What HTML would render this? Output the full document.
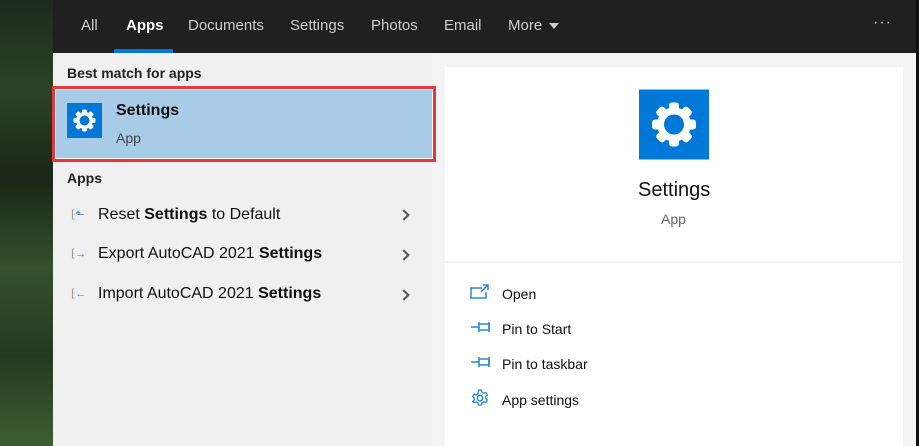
<!DOCTYPE html>
<html><head><meta charset="utf-8"><style>
*{margin:0;padding:0;box-sizing:border-box}
body{width:919px;height:446px;overflow:hidden;position:relative;font-family:"Segoe UI","Liberation Sans",sans-serif;background:#f0f0f0}
.forest{position:absolute;left:0;top:0;width:53px;height:446px;background:linear-gradient(180deg,#1d2a1c 0%,#2c4227 20%,#1a2617 40%,#34502c 60%,#233a1f 80%,#3d5e33 100%)}
.top{position:absolute;left:53px;top:0;width:866px;height:53px;background:#202020}
.tab{position:absolute;top:17px;color:#cfcfcf;font-size:15px}
.left{position:absolute;left:53px;top:53px;width:379px;height:393px;background:#f0f0f0}
.right{position:absolute;left:432px;top:53px;width:484px;height:393px;background:#f3f3f3}
.card{position:absolute;background:#fff;left:445px;width:458px}
.rb{position:absolute;right:0;top:0;width:3px;height:446px;background:#111}
.t{position:absolute;color:#111;white-space:nowrap}
.chev{position:absolute;left:400px;width:8px;height:8px;border-right:2px solid #555;border-top:2px solid #555;transform:rotate(45deg)}
</style></head><body>
<div class="forest"></div>
<div class="top">
<span class="tab" style="left:28px">All</span>
<span class="tab" style="left:73px;color:#fff;font-weight:bold">Apps</span>
<div style="position:absolute;left:61px;top:49px;width:59px;height:4px;background:#0078d7"></div>
<span class="tab" style="left:135px">Documents</span>
<span class="tab" style="left:237px">Settings</span>
<span class="tab" style="left:318px">Photos</span>
<span class="tab" style="left:391px">Email</span>
<span class="tab" style="left:455px">More</span>
<span style="position:absolute;left:496px;top:23px;border-left:5px solid transparent;border-right:5px solid transparent;border-top:6px solid #cfcfcf"></span>
<span style="position:absolute;left:820px;top:14px;color:#ccc;font-size:16px;letter-spacing:1px">···</span>
</div>
<div class="left"></div>
<div class="right"></div>
<div class="card" style="top:67px;height:194px"></div>
<div class="card" style="top:263px;height:183px"></div>
<div class="rb"></div>

<div class="t" style="left:67px;top:65px;font-size:14px;font-weight:bold;color:#222">Best match for apps</div>
<div style="position:absolute;left:52px;top:86px;width:384px;height:76px;background:#a8cbe7;border:3px solid #e8383d;box-shadow:inset 0 0 0 1px #fff"></div>
<svg style="position:absolute;left:67px;top:103px" width="35" height="35" viewBox="0 0 70 70"><rect width="70" height="70" fill="#0078d7"/><g fill="#fff" transform="translate(35 35)"><rect x="-5" y="-22" width="10" height="44" rx="3"/><rect x="-5" y="-22" width="10" height="44" rx="3" transform="rotate(45)"/><rect x="-5" y="-22" width="10" height="44" rx="3" transform="rotate(90)"/><rect x="-5" y="-22" width="10" height="44" rx="3" transform="rotate(135)"/><circle r="17"/></g><circle cx="35" cy="35" r="10" fill="#0078d7"/></svg>
<div class="t" style="left:116px;top:102px;font-size:16px;font-weight:bold">Settings</div>
<div class="t" style="left:116px;top:130px;font-size:14px;color:#444">App</div>

<div class="t" style="left:67px;top:170px;font-size:14px;font-weight:bold;color:#222">Apps</div>
<div class="t" style="left:71px;top:208px;font-size:11px;color:#999">⁅<span style="color:#3a7fd5">⬑</span></div>
<div class="t" style="left:98px;top:206px;font-size:16px">Reset <b>Settings</b> to Default</div>
<div class="chev" style="top:211px"></div>
<div class="t" style="left:71px;top:247px;font-size:11px;color:#999">⁅<span style="color:#3a7fd5">→</span></div>
<div class="t" style="left:98px;top:245px;font-size:16px">Export AutoCAD 2021 <b>Settings</b></div>
<div class="chev" style="top:251px"></div>
<div class="t" style="left:71px;top:287px;font-size:11px;color:#999">⁅<span style="color:#3a7fd5">←</span></div>
<div class="t" style="left:98px;top:285px;font-size:16px">Import AutoCAD 2021 <b>Settings</b></div>
<div class="chev" style="top:291px"></div>

<svg style="position:absolute;left:639px;top:89px" width="70" height="71" viewBox="0 0 70 70"><rect width="70" height="70" fill="#0078d7"/><g fill="#fff" transform="translate(35 35)"><rect x="-5" y="-22" width="10" height="44" rx="3"/><rect x="-5" y="-22" width="10" height="44" rx="3" transform="rotate(45)"/><rect x="-5" y="-22" width="10" height="44" rx="3" transform="rotate(90)"/><rect x="-5" y="-22" width="10" height="44" rx="3" transform="rotate(135)"/><circle r="17"/></g><circle cx="35" cy="35" r="10" fill="#0078d7"/></svg>
<div class="t" style="left:638px;top:179px;font-size:20px">Settings</div>
<div class="t" style="left:661px;top:211px;font-size:14px;color:#666">App</div>

<svg style="position:absolute;left:470px;top:284px" width="20" height="16" viewBox="0 0 20 16" fill="none" stroke="#2b88d8" stroke-width="1.5"><path d="M12 4H1v10h15V8"/><path d="M13 1h5v5M18 1l-7 7"/></svg>
<div class="t" style="left:502px;top:286px;font-size:14px">Open</div>
<svg style="position:absolute;left:471px;top:321px" width="20" height="14" viewBox="0 0 20 14" fill="none" stroke="#2b88d8" stroke-width="1.5"><path d="M0 6h8M8 1v10M8 3h10v6H8"/><path d="M18 1v10"/></svg>
<div class="t" style="left:502px;top:321px;font-size:14px">Pin to Start</div>
<svg style="position:absolute;left:471px;top:356px" width="20" height="14" viewBox="0 0 20 14" fill="none" stroke="#2b88d8" stroke-width="1.5"><path d="M0 6h8M8 1v10M8 3h10v6H8"/><path d="M18 1v10"/></svg>
<div class="t" style="left:502px;top:356px;font-size:14px">Pin to taskbar</div>
<svg style="position:absolute;left:471px;top:389px" width="18" height="18" viewBox="0 0 18 18" fill="none" stroke="#2b88d8" stroke-width="1.3"><path d="M7.5 1h3l.5 2.2 1.8 1 2.1-.8 1.5 2.6-1.7 1.5v2l1.7 1.5-1.5 2.6-2.1-.8-1.8 1-.5 2.2h-3l-.5-2.2-1.8-1-2.1.8L1.6 12.6 3.3 11.1v-2L1.6 7.6 3.1 5l2.1.8 1.8-1z"/><circle cx="9" cy="9" r="2.8"/></svg>
<div class="t" style="left:502px;top:392px;font-size:14px">App settings</div>
</body></html>
